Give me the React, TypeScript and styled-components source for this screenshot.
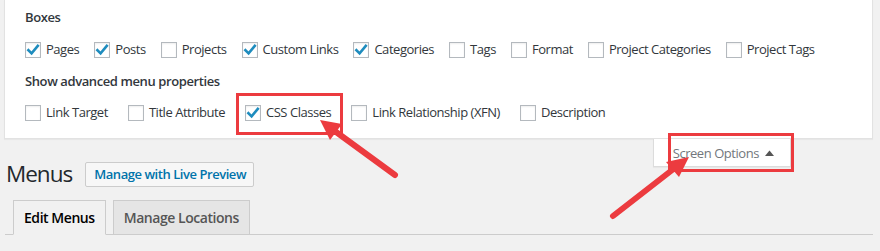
import React from "react";
import styled, { createGlobalStyle } from "styled-components";

const Global = createGlobalStyle`
  html, body { margin: 0; padding: 0; background: #f1f1f1; }
  body {
    font-family: "Open Sans", "Noto Sans", Arial, sans-serif;
    font-size: 13px;
    color: #23282d;
    -webkit-font-smoothing: antialiased;
  }
`;

const Page = styled.div`
  position: relative;
  width: 880px;
  height: 251px;
  overflow: hidden;
`;

const Panel = styled.div`
  margin: 0 7px 0 4px;
  background: #fff;
  border: 1px solid #e2e2e2;
  border-top: none;
  box-shadow: 0 1px 1px rgba(0, 0, 0, 0.04);
  padding: 8px 20px 12px 20px;
  display: flex;
  flex-direction: column;
`;

const Legend = styled.div<{ $mt?: number }>`
  height: 18px;
  line-height: 18px;
  font-weight: 600;
  letter-spacing: -0.4px;
  color: #32373c;
  margin-top: ${(p) => p.$mt ?? 0}px;
`;

const Row = styled.div<{ $gap: number; $mt: number }>`
  display: flex;
  align-items: center;
  height: 26px;
  gap: ${(p) => p.$gap}px;
  margin-top: ${(p) => p.$mt}px;
`;

const Item = styled.label`
  display: flex;
  align-items: center;
  gap: 5px;
  line-height: 18px;
  letter-spacing: -0.46px;
  white-space: nowrap;
  padding-bottom: 3px;
  color: #32373c;
`;

const Box = styled.span`
  box-sizing: border-box;
  width: 16px;
  height: 16px;
  border: 1px solid #b4b9be;
  background: #fff;
  box-shadow: inset 0 1px 2px rgba(0, 0, 0, 0.07);
  display: flex;
  align-items: center;
  justify-content: center;
  margin-top: 3px;
  flex: none;
`;

const Checkbox = ({ checked, label }: { checked?: boolean; label: string }) => (
  <Item>
    <Box>
      {checked && (
        <svg width="14" height="14" viewBox="0 0 14 14">
          <path
            d="M2.4 7.2 L5.6 10.4 L11.8 2.9"
            fill="none"
            stroke="#1e8cbe"
            strokeWidth="2.6"
            strokeLinecap="square"
            strokeLinejoin="miter"
          />
        </svg>
      )}
    </Box>
    {label}
  </Item>
);

const Main = styled.div`
  display: flow-root;
  padding-left: 5px;
  padding-right: 7px;
`;

const MetaTab = styled.button`
  float: right;
  margin-right: 82px;
  height: 28px;
  padding: 3px 16px 3px 19px;
  background: #fff;
  border: 1px solid #dcdcdc;
  border-top: none;
  box-shadow: 0 1px 1px rgba(0, 0, 0, 0.04);
  font: inherit;
  font-size: 13px;
  line-height: 22px;
  letter-spacing: -0.45px;
  color: #72777c;
  display: flex;
  align-items: center;
  gap: 6px;
`;

const Header = styled.div`
  display: flex;
  align-items: center;
  height: 30px;
  margin-top: 20px;
  padding-left: 1px;
`;

const Title = styled.h1`
  margin: 0;
  font-size: 22.5px;
  font-weight: 400;
  line-height: 30px;
  letter-spacing: -1px;
  color: #23282d;
`;

const PreviewButton = styled.a`
  margin-left: 13px;
  height: 25px;
  box-sizing: border-box;
  padding: 0 7px 0 8px;
  border: 1px solid #ccc;
  border-radius: 2px;
  background: #f7f7f7;
  color: #0073aa;
  font-weight: 600;
  font-size: 13px;
  line-height: 23px;
  letter-spacing: -0.45px;
  text-decoration: none;
  margin-top: 1px;
`;

const TabBar = styled.div`
  margin-top: 11px;
  display: flex;
  gap: 7px;
  padding-left: 8px;
  border-bottom: 1px solid #ccc;
  height: 35px;
  box-sizing: border-box;
`;

const Tab = styled.div<{ $active?: boolean }>`
  height: 35px;
  box-sizing: border-box;
  padding: 5px 10px;
  line-height: 24px;
  font-size: 14px;
  font-weight: 600;
  letter-spacing: -0.45px;
  border: 1px solid #ccc;
  border-bottom-color: ${(p) => (p.$active ? "#f1f1f1" : "#ccc")};
  background: ${(p) => (p.$active ? "#f1f1f1" : "#e5e5e5")};
  color: ${(p) => (p.$active ? "#000" : "#555")};
`;

const Highlight = styled.div<{ $x: number; $y: number; $w: number; $h: number }>`
  position: absolute;
  left: ${(p) => p.$x}px;
  top: ${(p) => p.$y}px;
  width: ${(p) => p.$w}px;
  height: ${(p) => p.$h}px;
  box-sizing: border-box;
  border: 3px solid #ec3b3f;
  pointer-events: none;
`;

const Arrows = styled.svg`
  position: absolute;
  left: 0;
  top: 0;
  pointer-events: none;
`;

const boxes = [
  { label: "Pages", checked: true },
  { label: "Posts", checked: true },
  { label: "Projects" },
  { label: "Custom Links", checked: true },
  { label: "Categories", checked: true },
  { label: "Tags" },
  { label: "Format" },
  { label: "Project Categories" },
  { label: "Project Tags" },
];

const advanced = [
  { label: "Link Target" },
  { label: "Title Attribute" },
  { label: "CSS Classes", checked: true },
  { label: "Link Relationship (XFN)" },
  { label: "Description" },
];

export default function App() {
  return (
    <Page>
      <Global />
      <Panel>
        <Legend>Boxes</Legend>
        <Row $gap={15} $mt={11}>
          {boxes.map((b) => (
            <Checkbox key={b.label} label={b.label} checked={b.checked} />
          ))}
        </Row>
        <Legend $mt={9}>Show advanced menu properties</Legend>
        <Row $gap={20} $mt={10}>
          {advanced.map((b) => (
            <Checkbox key={b.label} label={b.label} checked={b.checked} />
          ))}
        </Row>
      </Panel>
      <Main>
        <MetaTab>
          Screen Options
          <svg width="9" height="6" viewBox="0 0 9 6">
            <path d="M0 6 L4.5 0.5 L9 6 Z" fill="#555" />
          </svg>
        </MetaTab>
        <Header>
          <Title>Menus</Title>
          <PreviewButton>Manage with Live Preview</PreviewButton>
        </Header>
        <TabBar>
          <Tab $active>Edit Menus</Tab>
          <Tab>Manage Locations</Tab>
        </TabBar>
      </Main>
      <Highlight $x={236} $y={93} $w={107} $h={42} />
      <Highlight $x={668} $y={133} $w={126} $h={39} />
      <Arrows width="880" height="251" viewBox="0 0 880 251">
        <line x1="395" y1="175" x2="332" y2="129" stroke="#ec3b3f" strokeWidth="6" strokeLinecap="round" />
        <polygon points="320,120 342,124 330,140" fill="#ec3b3f" />
        <line x1="613" y1="216" x2="676" y2="167" stroke="#ec3b3f" strokeWidth="6" strokeLinecap="round" />
        <polygon points="689,157 679,177 666,162" fill="#ec3b3f" />
      </Arrows>
    </Page>
  );
}
